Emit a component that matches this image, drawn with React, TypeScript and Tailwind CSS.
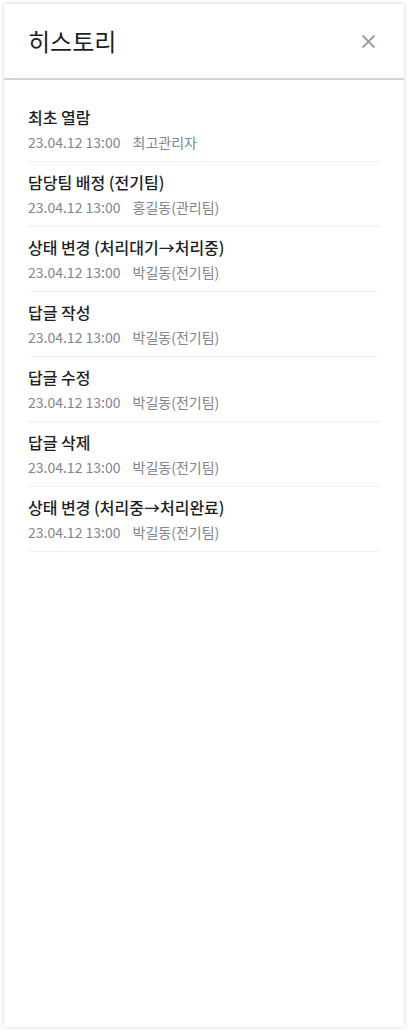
import React from 'react';

interface HistoryItem {
  id: number;
  title: string;
  date: string;
  author: string;
}

const items: HistoryItem[] = [
  { id: 1, title: '최초 열람', date: '23.04.12 13:00', author: '최고관리자' },
  { id: 2, title: '담당팀 배정 (전기팀)', date: '23.04.12 13:00', author: '홍길동(관리팀)' },
  { id: 3, title: '상태 변경 (처리대기→처리중)', date: '23.04.12 13:00', author: '박길동(전기팀)' },
  { id: 4, title: '답글 작성', date: '23.04.12 13:00', author: '박길동(전기팀)' },
  { id: 5, title: '답글 수정', date: '23.04.12 13:00', author: '박길동(전기팀)' },
  { id: 6, title: '답글 삭제', date: '23.04.12 13:00', author: '박길동(전기팀)' },
  { id: 7, title: '상태 변경 (처리중→처리완료)', date: '23.04.12 13:00', author: '박길동(전기팀)' },
];

export default function App() {
  return (
    <div
      className="bg-white p-1"
      style={{ fontFamily: '"Noto Sans CJK KR", "Noto Sans", sans-serif' }}
    >
      <div className="h-[1023px] bg-white shadow-[0_0_4px_rgba(0,0,0,0.18)] flex flex-col">
        {/* header */}
        <div className="h-[76px] flex items-center justify-between pl-6 pr-7 border-b-2 border-[#d1d3da]">
          <h1 className="text-2xl text-[#1d1f24] leading-none">히스토리</h1>
          <button className="w-4 h-4 flex items-center justify-center text-[#9a9ea8]">
            <svg width="15" height="15" viewBox="0 0 15 15" fill="none">
              <path d="M1.5 1.5L13.5 13.5M13.5 1.5L1.5 13.5" stroke="currentColor" strokeWidth="1.8" />
            </svg>
          </button>
        </div>

        {/* list */}
        <div className="pt-[17px] pl-6 pr-6">
          {items.map(item => (
            <div key={item.id} className="pt-2 pb-[9px] border-b border-[#f1f2f4]">
              <div className="text-base leading-6 font-medium text-[#1d1f24]">{item.title}</div>
              <div className="mt-[3px] flex gap-3 text-sm leading-5 text-[#80858f]">
                <span>{item.date}</span>
                <span>{item.author}</span>
              </div>
            </div>
          ))}
        </div>
      </div>
    </div>
  );
}
